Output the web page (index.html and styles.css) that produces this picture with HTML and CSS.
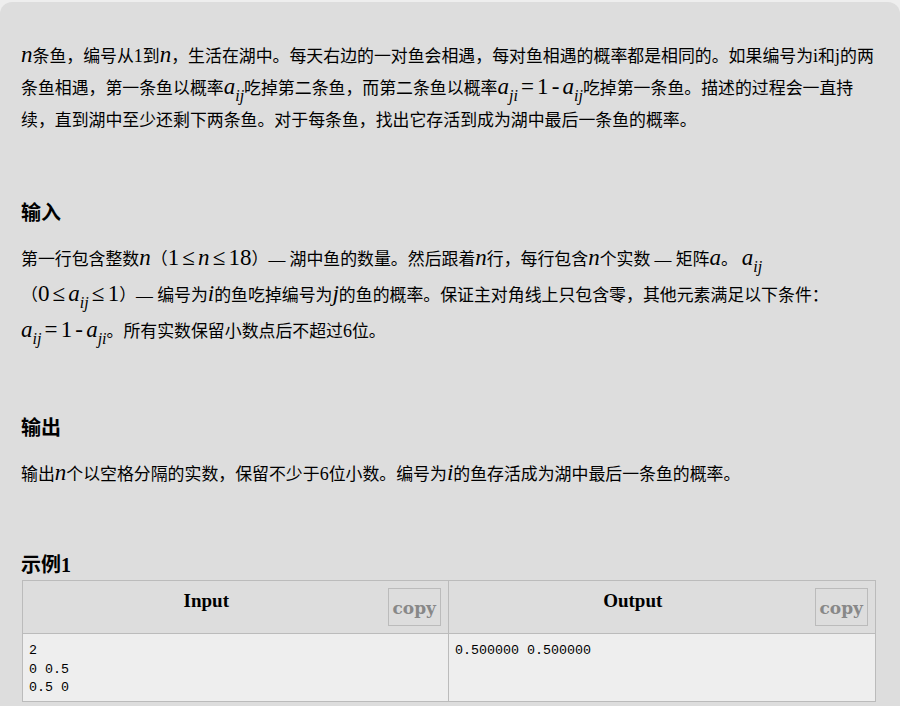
FILE: index.html
```
<!DOCTYPE html>
<html lang="zh">
<head>
<meta charset="utf-8">
<title>Fish</title>
<link rel="stylesheet" href="styles.css">
</head>
<body>
<main class="card">
  <p class="para"><span class="m"><i>n</i></span>条鱼，编号从<span class="d">1</span>到<span class="m"><i>n</i></span>，生活在湖中。每天右边的一对鱼会相遇，每对鱼相遇的概率都是相同的。如果编号为<span class="d">i</span>和<span class="d">j</span>的两条鱼相遇，第一条鱼以概率<span class="m"><i>a</i><sub>ij</sub></span>吃掉第二条鱼，而第二条鱼以概率<span class="m"><i>a</i><sub>ji</sub> = 1 - <i>a</i><sub>ij</sub></span>吃掉第一条鱼。描述的过程会一直持续，直到湖中至少还剩下两条鱼。对于每条鱼，找出它存活到成为湖中最后一条鱼的概率。</p>
  <h2 class="head head-input">输入</h2>
  <p class="para para-tall">第一行包含整数<span class="m"><i>n</i></span>（<span class="m">1 ≤ <i>n</i> ≤ 18</span>）— 湖中鱼的数量。然后跟着<span class="m"><i>n</i></span>行，每行包含<span class="m"><i>n</i></span>个实数 — 矩阵<span class="m"><i>a</i></span>。<span class="m m-gap"><i>a</i><sub>ij</sub></span> <span class="group">（<span class="m">0 ≤ <i>a</i><sub>ij</sub> ≤ 1</span>）</span>— 编号为<span class="m"><i>i</i></span>的鱼吃掉编号为<span class="m"><i>j</i></span>的鱼的概率。保证主对角线上只包含零，其他元素满足以下条件：<span class="m"><i>a</i><sub>ij</sub> = 1 - <i>a</i><sub>ji</sub></span>。所有实数保留小数点后不超过<span class="d">6</span>位。</p>
  <h2 class="head head-output">输出</h2>
  <p class="para">输出<span class="m"><i>n</i></span>个以空格分隔的实数，保留不少于<span class="d">6</span>位小数。编号为<span class="m"><i>i</i></span>的鱼存活成为湖中最后一条鱼的概率。</p>
  <h2 class="head head-sample">示例1</h2>
  <table class="sample">
    <thead>
      <tr>
        <th><div class="th-inner"><span class="th-label">Input</span><span class="copy">copy</span></div></th>
        <th><div class="th-inner"><span class="th-label">Output</span><span class="copy">copy</span></div></th>
      </tr>
    </thead>
    <tbody>
      <tr>
        <td><pre>2
0 0.5
0.5 0</pre></td>
        <td><pre>0.500000 0.500000</pre></td>
      </tr>
    </tbody>
  </table>
</main>
</body>
</html>
```
FILE: styles.css
```
html, body { margin: 0; padding: 0; height: 100%; }
body {
  background: #eeeeee;
  color: #000;
  overflow: hidden;
  font-family: "Liberation Serif", "Noto Sans CJK SC", serif;
  font-size: 16.9px;
}
.card {
  box-sizing: border-box;
  margin-top: 2px;
  height: 704px;
  padding: 39px 22px 0 21px;
  background: #dddddd;
  border-radius: 12px 12px 0 0;
  overflow: hidden;
}
.para {
  margin: 0;
  line-height: 32px;
}
.para-tall { line-height: 36px; }
.d {
  font-size: 18px;
  line-height: 1;
}
.m {
  white-space: nowrap;
  font-size: 23px;
  line-height: 1;
  word-spacing: -2.6px;
}
.m-gap { margin-left: 4px; }
.group {
  white-space: nowrap;
}
.m sub {
  font-size: 16px;
  font-style: italic;
  line-height: 0;
  vertical-align: -7px;
}
.head {
  margin: 0;
  font-size: 20px;
  font-weight: 700;
  line-height: 24px;
  font-family: "Noto Sans CJK SC", "Liberation Serif", sans-serif;
}
.head-input { margin-top: 63px; margin-bottom: 18px; }
.head-output { margin-top: 65px; margin-bottom: 20px; }
.head-sample {
  margin-top: 63px;
  font-family: "Liberation Serif", "Noto Sans CJK SC", serif;
  line-height: 22px;
}
.sample {
  width: 854px;
  margin: 4px 0 0 1px;
  border-collapse: collapse;
  table-layout: fixed;
}
.sample th, .sample td {
  border: 1px solid #bbbbbb;
  padding: 0;
}
.sample th { height: 52px; }
.sample th:first-child { width: 425px; }
.th-inner {
  display: flex;
  height: 52px;
  padding: 7px 7px 0 0;
  box-sizing: border-box;
}
.th-label {
  flex: 1;
  text-align: center;
  font-size: 19px;
  line-height: 24px;
  padding: 1px 0 0 2px;
  font-weight: 700;
}
.copy {
  box-sizing: border-box;
  width: 53.5px;
  height: 38px;
  border: 1px solid #bbbbbb;
  color: #888888;
  font-family: "DejaVu Serif", serif;
  font-size: 17px;
  font-weight: 700;
  line-height: 38px;
  text-align: center;
}
.sample td {
  background: #eeeeee;
  vertical-align: top;
  height: 67px;
}
pre {
  margin: 0;
  padding: 8px 6px 0;
  font-family: "Liberation Mono", monospace;
  font-size: 13.33px;
  line-height: 18.5px;
}
```
